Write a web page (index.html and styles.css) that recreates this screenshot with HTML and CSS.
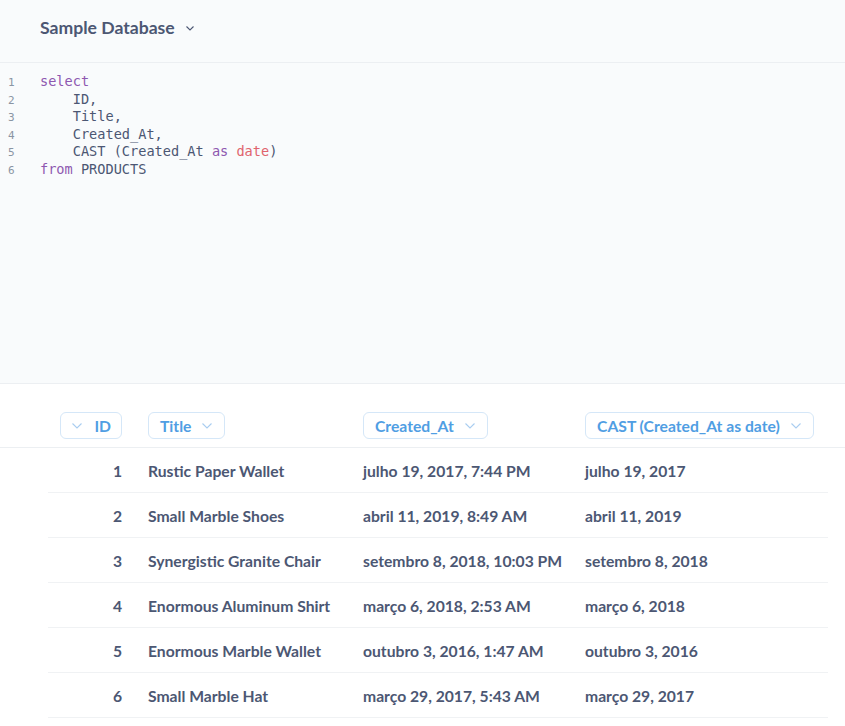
FILE: index.html
```html
<!DOCTYPE html>
<html>
<head>
<meta charset="utf-8">
<link rel="stylesheet" href="styles.css">
</head>
<body>
<div class="top">
  <header class="db-bar">
    <span class="db-name">Sample Database</span>
    <svg class="db-chev" width="8" height="5" viewBox="0 0 8 5"><path d="M0.5 0.5 L4 4 L7.5 0.5" fill="none" stroke="#4c5773" stroke-width="1.1"/></svg>
  </header>
  <div class="editor">
    <div class="gutter">
      <div>1</div><div>2</div><div>3</div><div>4</div><div>5</div><div>6</div>
    </div>
    <pre class="code"><span class="kw">select</span>
    ID,
    Title,
    Created_At,
    CAST (Created_At <span class="kw">as</span> <span class="ty">date</span>)
<span class="kw">from</span> PRODUCTS</pre>
  </div>
</div>
<div class="results">
  <div class="thead">
    <div class="th c-id"><span class="pill"><svg class="chev" width="10" height="6" viewBox="0 0 10 6"><path d="M0.5 0.5 L5 5 L9.5 0.5" fill="none" stroke="#a9cdf0" stroke-width="1.1"/></svg><span>ID</span></span></div>
    <div class="th c-title"><span class="pill"><span>Title</span><svg class="chev" width="10" height="6" viewBox="0 0 10 6"><path d="M0.5 0.5 L5 5 L9.5 0.5" fill="none" stroke="#a9cdf0" stroke-width="1.1"/></svg></span></div>
    <div class="th c-created"><span class="pill"><span>Created_At</span><svg class="chev" width="10" height="6" viewBox="0 0 10 6"><path d="M0.5 0.5 L5 5 L9.5 0.5" fill="none" stroke="#a9cdf0" stroke-width="1.1"/></svg></span></div>
    <div class="th c-cast"><span class="pill"><span>CAST (Created_At as date)</span><svg class="chev" width="10" height="6" viewBox="0 0 10 6"><path d="M0.5 0.5 L5 5 L9.5 0.5" fill="none" stroke="#a9cdf0" stroke-width="1.1"/></svg></span></div>
  </div>
  <div class="tbody">
    <div class="tr"><div class="td c-id">1</div><div class="td c-title">Rustic Paper Wallet</div><div class="td c-created">julho 19, 2017, 7:44 PM</div><div class="td c-cast">julho 19, 2017</div></div>
    <div class="tr"><div class="td c-id">2</div><div class="td c-title">Small Marble Shoes</div><div class="td c-created">abril 11, 2019, 8:49 AM</div><div class="td c-cast">abril 11, 2019</div></div>
    <div class="tr"><div class="td c-id">3</div><div class="td c-title">Synergistic Granite Chair</div><div class="td c-created">setembro 8, 2018, 10:03 PM</div><div class="td c-cast">setembro 8, 2018</div></div>
    <div class="tr"><div class="td c-id">4</div><div class="td c-title">Enormous Aluminum Shirt</div><div class="td c-created">março 6, 2018, 2:53 AM</div><div class="td c-cast">março 6, 2018</div></div>
    <div class="tr"><div class="td c-id">5</div><div class="td c-title">Enormous Marble Wallet</div><div class="td c-created">outubro 3, 2016, 1:47 AM</div><div class="td c-cast">outubro 3, 2016</div></div>
    <div class="tr"><div class="td c-id">6</div><div class="td c-title">Small Marble Hat</div><div class="td c-created">março 29, 2017, 5:43 AM</div><div class="td c-cast">março 29, 2017</div></div>
  </div>
</div>
</body>
</html>
```

FILE: styles.css
```css
* { box-sizing: border-box; }
html, body { margin: 0; padding: 0; }
body {
  background: #ffffff;
  font-family: Lato, "Noto Sans", sans-serif;
  color: #4c5773;
  width: 845px;
  overflow: hidden;
}
.top {
  background: #f9fbfc;
  border-bottom: 1px solid #eceff2;
}
.db-bar {
  height: 63px;
  display: flex;
  align-items: center;
  padding-left: 40px;
  padding-bottom: 8px;
  border-bottom: 1px solid #eceff2;
}
.db-name {
  font-weight: 700;
  font-size: 17.6px;
  color: #4c5773;
}
.db-chev { margin-left: 11px; margin-top: 3px; }
.editor {
  height: 320px;
  display: flex;
  padding-top: 10px;
}
.gutter {
  width: 40px;
  padding-left: 8px;
  font-family: "DejaVu Sans Mono", monospace;
  font-size: 11px;
  color: #8a95a3;
  line-height: 17.6px;
  padding-top: 1px;
}
.code {
  margin: 0;
  font-family: "DejaVu Sans Mono", monospace;
  font-size: 13.6px;
  line-height: 17.6px;
  color: #4c5773;
}
.kw { color: #8e58b0; }
.ty { color: #e0636e; }
.results { padding-top: 28px; }
.thead {
  display: flex;
  height: 36px;
  border-bottom: 1px solid #eceff2;
  padding-left: 48px;
}
.th { display: flex; align-items: flex-start; }
.pill {
  display: inline-flex;
  align-items: center;
  height: 27px;
  border: 1px solid #d5e7f8;
  border-radius: 6px;
  color: #509ee3;
  font-weight: 700;
  font-size: 15.7px;
  padding: 0 12px 0 11px;
  gap: 11px;
}
.th.c-id .pill { padding: 0 10px 0 11px; gap: 12px; }
.c-id { width: 87px; justify-content: flex-end; padding-right: 13px; }
.c-title { width: 215px; padding-left: 13px; }
.c-created { width: 222px; padding-left: 13px; }
.c-cast { width: 253px; padding-left: 13px; }
.tbody { padding-left: 48px; }
.tr {
  display: flex;
  width: 780px;
  height: 45px;
  border-bottom: 1px solid #f0f2f4;
  align-items: center;
}
.td {
  font-weight: 700;
  font-size: 15.7px;
  color: #4c5773;
  display: flex;
  padding-top: 1px;
}
```
